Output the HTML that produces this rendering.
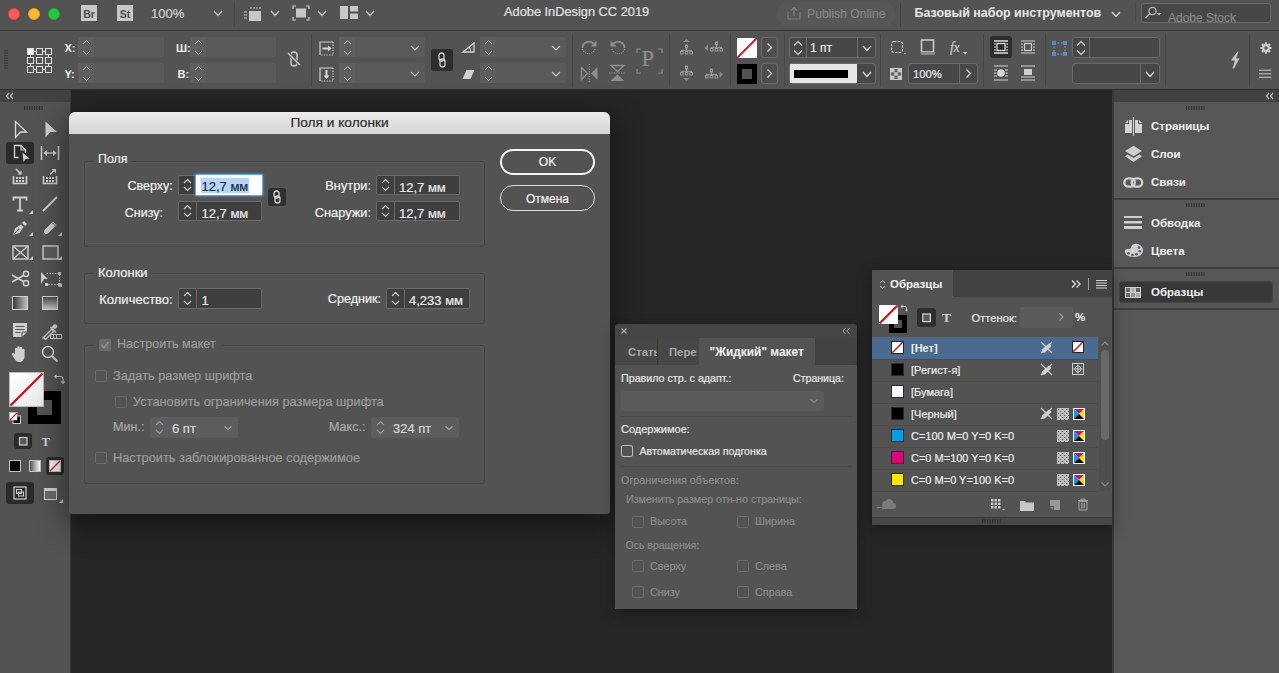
<!DOCTYPE html>
<html><head><meta charset="utf-8"><title>InDesign</title>
<style>
html,body{margin:0;padding:0;width:1279px;height:673px;overflow:hidden;background:#262626;font-family:"Liberation Sans",sans-serif;}
body>div,body>span,body>svg{position:absolute;box-sizing:border-box;}
.t{position:absolute;white-space:nowrap;line-height:1;-webkit-text-stroke:0.2px currentColor;}
.t[style*="font-weight:700"]{-webkit-text-stroke:0.05px currentColor;}
</style></head><body>
<div style="left:0px;top:0px;width:1279px;height:673px;background:#262626"></div>
<div style="left:0px;top:0px;width:1279px;height:30px;background:#535353"></div>
<div style="left:0px;top:30px;width:1279px;height:1px;background:#383838"></div>
<div style="left:0px;top:31px;width:1279px;height:58px;background:#535353"></div>
<div style="left:0px;top:89px;width:1279px;height:1px;background:#2e2e2e"></div>
<div style="left:0px;top:90px;width:70px;height:583px;background:#535353"></div>
<div style="left:0px;top:90px;width:70px;height:12px;background:#424242"></div>
<div style="left:70px;top:90px;width:1px;height:583px;background:#3a3a3a"></div>
<div style="left:1113px;top:90px;width:166px;height:583px;background:#575757"></div>
<div style="left:1112px;top:90px;width:2px;height:583px;background:#3a3a3a"></div>
<div style="left:1114px;top:90px;width:165px;height:12px;background:#424242"></div>
<div style="left:7.8px;top:7.6px;width:12.4px;height:12.4px;background:#fc5f57;border-radius:50%;border:0.5px solid #e0443e"></div>
<div style="left:27.8px;top:7.6px;width:12.4px;height:12.4px;background:#fdbc2e;border-radius:50%;border:0.5px solid #dea123"></div>
<div style="left:47.8px;top:7.6px;width:12.4px;height:12.4px;background:#2ac840;border-radius:50%;border:0.5px solid #1aab29"></div>
<div style="left:81px;top:5px;width:16px;height:16px;background:#c9c9c9"></div>
<span class="t" style="left:89px;top:8.61px;font-size:10.5px;color:#505050;font-weight:700;transform:translateX(-50%);">Br</span>
<div style="left:117px;top:5px;width:16px;height:16px;background:#c9c9c9"></div>
<span class="t" style="left:125px;top:8.61px;font-size:10.5px;color:#505050;font-weight:700;transform:translateX(-50%);">St</span>
<span class="t" style="left:151px;top:7.00px;font-size:13px;color:#d2d2d2;font-weight:400;">100%</span>
<svg style="left:213px;top:10px;" width="10" height="6.5" viewBox="0 0 10 6.5"><path d="M1 1 L5.0 5.5 L9 1" fill="none" stroke="#bdbdbd" stroke-width="1.3"/></svg>
<div style="left:234px;top:3px;width:1px;height:24px;background:#474747"></div>
<svg style="left:243px;top:5px;" width="22" height="17" viewBox="0 0 22 17"><rect x="6" y="6" width="12" height="10" fill="#c8c8c8"/><path d="M8 2v2M11 2v2M14 2v2M17 2v2" stroke="#c8c8c8" stroke-width="1"/><path d="M1 7h3M1 10h3M1 13h3" stroke="#c8c8c8" stroke-width="1"/></svg>
<svg style="left:270px;top:10px;" width="10" height="6.5" viewBox="0 0 10 6.5"><path d="M1 1 L5.0 5.5 L9 1" fill="none" stroke="#c8c8c8" stroke-width="1.3"/></svg>
<svg style="left:292px;top:5px;" width="18" height="16" viewBox="0 0 18 16"><path d="M1 4V1h3M14 1h3v3M17 12v3h-3M4 15H1v-3" fill="none" stroke="#c8c8c8" stroke-width="1.2"/><rect x="4" y="3.5" width="10" height="9" fill="#c8c8c8"/></svg>
<svg style="left:317px;top:10px;" width="10" height="6.5" viewBox="0 0 10 6.5"><path d="M1 1 L5.0 5.5 L9 1" fill="none" stroke="#c8c8c8" stroke-width="1.3"/></svg>
<svg style="left:340px;top:6px;" width="18" height="13" viewBox="0 0 18 13"><rect x="0" y="0" width="8" height="13" fill="#c8c8c8"/><rect x="10" y="0" width="8" height="5.5" fill="#c8c8c8"/><rect x="10" y="7.5" width="8" height="5.5" fill="#c8c8c8"/></svg>
<svg style="left:365px;top:10px;" width="10" height="6.5" viewBox="0 0 10 6.5"><path d="M1 1 L5.0 5.5 L9 1" fill="none" stroke="#c8c8c8" stroke-width="1.3"/></svg>
<span class="t" style="left:504px;top:5.66px;font-size:12.8px;color:#e2e2e2;font-weight:400;">Adobe InDesign CC 2019</span>
<div style="left:777px;top:2px;width:118px;height:25px;background:#575757;border-radius:12px"></div>
<svg style="left:787px;top:6px;" width="14" height="14" viewBox="0 0 14 14"><path d="M1 6v7h12V6" fill="none" stroke="#7c7c7c" stroke-width="1.2"/><path d="M7 10V1.5M4 4.5l3-3 3 3" fill="none" stroke="#7c7c7c" stroke-width="1.2"/></svg>
<span class="t" style="left:807px;top:7.67px;font-size:12.2px;color:#868686;font-weight:400;">Publish Online</span>
<div style="left:900px;top:3px;width:1px;height:24px;background:#474747"></div>
<span class="t" style="left:914.5px;top:7.46px;font-size:12.45px;color:#e6e6e6;font-weight:700;">Базовый набор инструментов</span>
<svg style="left:1111px;top:10.5px;" width="10" height="6.5" viewBox="0 0 10 6.5"><path d="M1 1 L5.0 5.5 L9 1" fill="none" stroke="#d0d0d0" stroke-width="1.4"/></svg>
<div style="left:1135px;top:3px;width:1px;height:20px;background:#4a4a4a"></div>
<div style="left:1141px;top:3px;width:130px;height:20px;background:#474747;border:1px solid #6a6a6a;border-radius:3px;overflow:hidden"><span class="t" style="left:26px;top:7.5px;font-size:12px;color:#8a8a8a">Adobe Stock</span></div>
<svg style="left:1144px;top:6px;" width="20" height="13" viewBox="0 0 20 13"><circle cx="8.5" cy="5" r="3.6" fill="none" stroke="#bbb" stroke-width="1.3"/><path d="M6 7.5L1.5 12" stroke="#bbb" stroke-width="1.5"/><path d="M12.5 7h5l-2.5 2.5z" fill="#bbb"/></svg>
<svg style="left:4px;top:50px;" width="4" height="20" viewBox="0 0 4 20"><rect x="0" y="0.0" width="4" height="1.2" fill="#3a3a3a"/><rect x="0" y="2.5" width="4" height="1.2" fill="#3a3a3a"/><rect x="0" y="5.0" width="4" height="1.2" fill="#3a3a3a"/><rect x="0" y="7.5" width="4" height="1.2" fill="#3a3a3a"/><rect x="0" y="10.0" width="4" height="1.2" fill="#3a3a3a"/><rect x="0" y="12.5" width="4" height="1.2" fill="#3a3a3a"/><rect x="0" y="15.0" width="4" height="1.2" fill="#3a3a3a"/><rect x="0" y="17.5" width="4" height="1.2" fill="#3a3a3a"/></svg>
<svg style="left:26.5px;top:47.5px;" width="27" height="27" viewBox="0 0 27 27"><rect x="0.5" y="0.5" width="6" height="6" fill="#f0f0f0" stroke="#e0e0e0" stroke-width="1"/><rect x="9.5" y="0.5" width="6" height="6" fill="none" stroke="#e0e0e0" stroke-width="1"/><rect x="18.5" y="0.5" width="6" height="6" fill="none" stroke="#e0e0e0" stroke-width="1"/><rect x="0.5" y="9.5" width="6" height="6" fill="none" stroke="#e0e0e0" stroke-width="1"/><rect x="9.5" y="9.5" width="6" height="6" fill="none" stroke="#e0e0e0" stroke-width="1"/><rect x="18.5" y="9.5" width="6" height="6" fill="none" stroke="#e0e0e0" stroke-width="1"/><rect x="0.5" y="18.5" width="6" height="6" fill="none" stroke="#e0e0e0" stroke-width="1"/><rect x="9.5" y="18.5" width="6" height="6" fill="none" stroke="#e0e0e0" stroke-width="1"/><rect x="18.5" y="18.5" width="6" height="6" fill="none" stroke="#e0e0e0" stroke-width="1"/><path d="M6.5 3.5h3M15.5 3.5h3M6.5 21.5h3M15.5 21.5h3M3.5 6.5v3M3.5 15.5v3M21.5 6.5v3M21.5 15.5v3" stroke="#e0e0e0" stroke-width="1"/></svg>
<span class="t" style="left:64.5px;top:42.69px;font-size:11px;color:#ececec;font-weight:700;">X:</span>
<span class="t" style="left:64.5px;top:68.69px;font-size:11px;color:#ececec;font-weight:700;">Y:</span>
<span class="t" style="left:176px;top:42.69px;font-size:11px;color:#ececec;font-weight:700;">Ш:</span>
<span class="t" style="left:177.5px;top:68.69px;font-size:11px;color:#ececec;font-weight:700;">В:</span>
<div style="left:78px;top:37px;width:86px;height:20px;background:#5a5a5a;border-radius:2px"></div>
<div style="left:78px;top:37px;width:16px;height:20px;background:#5e5e5e"></div>
<svg style="left:81.5px;top:39.2px;" width="9" height="6" viewBox="0 0 9 6"><path d="M1 5 L4.5 1.5 L8 5" fill="none" stroke="#bdbdbd" stroke-width="1"/></svg>
<svg style="left:81.5px;top:49.5px;" width="9" height="6" viewBox="0 0 9 6"><path d="M1 1 L4.5 4.5 L8 1" fill="none" stroke="#bdbdbd" stroke-width="1"/></svg>
<div style="left:78px;top:63px;width:86px;height:20px;background:#5a5a5a;border-radius:2px"></div>
<div style="left:78px;top:63px;width:16px;height:20px;background:#5e5e5e"></div>
<svg style="left:81.5px;top:65.2px;" width="9" height="6" viewBox="0 0 9 6"><path d="M1 5 L4.5 1.5 L8 5" fill="none" stroke="#bdbdbd" stroke-width="1"/></svg>
<svg style="left:81.5px;top:75.5px;" width="9" height="6" viewBox="0 0 9 6"><path d="M1 1 L4.5 4.5 L8 1" fill="none" stroke="#bdbdbd" stroke-width="1"/></svg>
<div style="left:190px;top:37px;width:86px;height:20px;background:#5a5a5a;border-radius:2px"></div>
<div style="left:190px;top:37px;width:16px;height:20px;background:#5e5e5e"></div>
<svg style="left:193.5px;top:39.2px;" width="9" height="6" viewBox="0 0 9 6"><path d="M1 5 L4.5 1.5 L8 5" fill="none" stroke="#bdbdbd" stroke-width="1"/></svg>
<svg style="left:193.5px;top:49.5px;" width="9" height="6" viewBox="0 0 9 6"><path d="M1 1 L4.5 4.5 L8 1" fill="none" stroke="#bdbdbd" stroke-width="1"/></svg>
<div style="left:190px;top:63px;width:86px;height:20px;background:#5a5a5a;border-radius:2px"></div>
<div style="left:190px;top:63px;width:16px;height:20px;background:#5e5e5e"></div>
<svg style="left:193.5px;top:65.2px;" width="9" height="6" viewBox="0 0 9 6"><path d="M1 5 L4.5 1.5 L8 5" fill="none" stroke="#bdbdbd" stroke-width="1"/></svg>
<svg style="left:193.5px;top:75.5px;" width="9" height="6" viewBox="0 0 9 6"><path d="M1 1 L4.5 4.5 L8 1" fill="none" stroke="#bdbdbd" stroke-width="1"/></svg>
<svg style="left:286px;top:51px;" width="16" height="16" viewBox="0 0 16 16"><rect x="5" y="1" width="6" height="14" rx="3" fill="none" stroke="#c8c8c8" stroke-width="1.5"/><path d="M2 2L14 14" stroke="#535353" stroke-width="3"/><path d="M2 2L14 14" stroke="#c8c8c8" stroke-width="1.5"/></svg>
<div style="left:311px;top:34px;width:1px;height:53px;background:#474747"></div>
<svg style="left:318.5px;top:40.5px;" width="15" height="15" viewBox="0 0 15 15"><path d="M1 14V1h13" fill="none" stroke="#d0d0d0" stroke-width="1.2"/><path d="M14 1v13H1" fill="none" stroke="#d0d0d0" stroke-width="1.2" stroke-dasharray="1.3 1.3"/><path d="M3.5 7.5h6" stroke="#d8d8d8" stroke-width="2"/><path d="M9 4.5l3.5 3-3.5 3z" fill="#d8d8d8"/></svg>
<svg style="left:318.5px;top:66.5px;" width="15" height="15" viewBox="0 0 15 15"><path d="M1 14V1h13" fill="none" stroke="#d0d0d0" stroke-width="1.2"/><path d="M14 1v13H1" fill="none" stroke="#d0d0d0" stroke-width="1.2" stroke-dasharray="1.3 1.3"/><path d="M7.5 3v6" stroke="#d8d8d8" stroke-width="2"/><path d="M4.5 8.5l3 3.5 3-3.5z" fill="#d8d8d8"/></svg>
<div style="left:339px;top:37px;width:86px;height:20px;background:#5a5a5a;border-radius:2px"></div>
<div style="left:339px;top:37px;width:16px;height:20px;background:#5e5e5e"></div>
<svg style="left:342.5px;top:39.2px;" width="9" height="6" viewBox="0 0 9 6"><path d="M1 5 L4.5 1.5 L8 5" fill="none" stroke="#bdbdbd" stroke-width="1"/></svg>
<svg style="left:342.5px;top:49.5px;" width="9" height="6" viewBox="0 0 9 6"><path d="M1 1 L4.5 4.5 L8 1" fill="none" stroke="#bdbdbd" stroke-width="1"/></svg>
<svg style="left:409.5px;top:44.5px;" width="10" height="6" viewBox="0 0 10 6"><path d="M1 1 L5.0 5 L9 1" fill="none" stroke="#c8c8c8" stroke-width="1.15"/></svg>
<div style="left:339px;top:63px;width:86px;height:20px;background:#5a5a5a;border-radius:2px"></div>
<div style="left:339px;top:63px;width:16px;height:20px;background:#5e5e5e"></div>
<svg style="left:342.5px;top:65.2px;" width="9" height="6" viewBox="0 0 9 6"><path d="M1 5 L4.5 1.5 L8 5" fill="none" stroke="#bdbdbd" stroke-width="1"/></svg>
<svg style="left:342.5px;top:75.5px;" width="9" height="6" viewBox="0 0 9 6"><path d="M1 1 L4.5 4.5 L8 1" fill="none" stroke="#bdbdbd" stroke-width="1"/></svg>
<svg style="left:409.5px;top:70.5px;" width="10" height="6" viewBox="0 0 10 6"><path d="M1 1 L5.0 5 L9 1" fill="none" stroke="#c8c8c8" stroke-width="1.15"/></svg>
<div style="left:431px;top:49px;width:22px;height:22px;background:#2d2d2d;border-radius:3px"></div>
<svg style="left:437px;top:52px;" width="10" height="16" viewBox="0 0 10 16"><rect x="2" y="1" width="5" height="8" rx="2.5" fill="none" stroke="#d0d0d0" stroke-width="1.3"/><rect x="3" y="7" width="5" height="8" rx="2.5" fill="none" stroke="#d0d0d0" stroke-width="1.3"/></svg>
<svg style="left:461px;top:42px;" width="15" height="11" viewBox="0 0 15 11"><path d="M2 10L13 1V10Z" fill="none" stroke="#d0d0d0" stroke-width="1.3" stroke-linejoin="miter"/><path d="M8.2 4.9A8 8 0 0 1 9.6 10" fill="none" stroke="#d0d0d0" stroke-width="1.1"/></svg>
<svg style="left:462px;top:69px;" width="13" height="11" viewBox="0 0 13 11"><path d="M4.5 1H12.5L8.5 10H0.5Z" fill="#d0d0d0"/></svg>
<div style="left:480px;top:37px;width:86px;height:20px;background:#5a5a5a;border-radius:2px"></div>
<div style="left:480px;top:37px;width:16px;height:20px;background:#5e5e5e"></div>
<svg style="left:483.5px;top:39.2px;" width="9" height="6" viewBox="0 0 9 6"><path d="M1 5 L4.5 1.5 L8 5" fill="none" stroke="#bdbdbd" stroke-width="1"/></svg>
<svg style="left:483.5px;top:49.5px;" width="9" height="6" viewBox="0 0 9 6"><path d="M1 1 L4.5 4.5 L8 1" fill="none" stroke="#bdbdbd" stroke-width="1"/></svg>
<svg style="left:550.5px;top:44.5px;" width="10" height="6" viewBox="0 0 10 6"><path d="M1 1 L5.0 5 L9 1" fill="none" stroke="#c8c8c8" stroke-width="1.15"/></svg>
<div style="left:480px;top:63px;width:86px;height:20px;background:#5a5a5a;border-radius:2px"></div>
<div style="left:480px;top:63px;width:16px;height:20px;background:#5e5e5e"></div>
<svg style="left:483.5px;top:65.2px;" width="9" height="6" viewBox="0 0 9 6"><path d="M1 5 L4.5 1.5 L8 5" fill="none" stroke="#bdbdbd" stroke-width="1"/></svg>
<svg style="left:483.5px;top:75.5px;" width="9" height="6" viewBox="0 0 9 6"><path d="M1 1 L4.5 4.5 L8 1" fill="none" stroke="#bdbdbd" stroke-width="1"/></svg>
<svg style="left:550.5px;top:70.5px;" width="10" height="6" viewBox="0 0 10 6"><path d="M1 1 L5.0 5 L9 1" fill="none" stroke="#c8c8c8" stroke-width="1.15"/></svg>
<div style="left:572px;top:34px;width:1px;height:53px;background:#474747"></div>
<svg style="left:580px;top:38px;" width="19" height="18" viewBox="0 0 19 18"><path d="M2.5 10A6.5 6.5 0 0 1 13.5 5.5" fill="none" stroke="#8e8e8e" stroke-width="1.8"/><path d="M16.5 2.5V8.5H10.5Z" fill="#8e8e8e"/><path d="M2.5 11A6.5 6.5 0 0 0 15 11" fill="none" stroke="#8e8e8e" stroke-width="1.2" stroke-dasharray="1 1.2"/></svg>
<svg style="left:608px;top:38px;" width="19" height="18" viewBox="0 0 19 18"><path d="M16.5 10A6.5 6.5 0 0 0 5.5 5.5" fill="none" stroke="#8e8e8e" stroke-width="1.8"/><path d="M2.5 2.5V8.5H8.5Z" fill="#8e8e8e"/><path d="M16.5 11A6.5 6.5 0 0 1 4 11" fill="none" stroke="#8e8e8e" stroke-width="1.2" stroke-dasharray="1 1.2"/></svg>
<svg style="left:580px;top:64px;" width="19" height="18" viewBox="0 0 19 18"><path d="M1.5 3.5V15.5L7.5 9.5Z" fill="none" stroke="#8e8e8e" stroke-width="1.3"/><path d="M17.5 3V16L11 9.5Z" fill="#8e8e8e"/><path d="M9.3 0V18" stroke="#9a9a9a" stroke-width="1" stroke-dasharray="1.2 1.2"/></svg>
<svg style="left:608px;top:64px;" width="19" height="18" viewBox="0 0 19 18"><path d="M3 1.5H16L9.5 7.5Z" fill="none" stroke="#8e8e8e" stroke-width="1.3"/><path d="M2.5 17H16.5L9.5 10.5Z" fill="#8e8e8e"/><path d="M1 9H18" stroke="#9a9a9a" stroke-width="1" stroke-dasharray="1.2 1.2"/></svg>
<svg style="left:636px;top:48px;" width="27" height="26" viewBox="0 0 27 26"><path d="M1 5V1h4M22 1h4v4M26 21v4h-4M5 25H1v-4" fill="none" stroke="#8e8e8e" stroke-width="1.2"/></svg>
<span class="t" style="left:641.5px;top:47.95px;font-size:22.5px;color:#8e8e8e;font-weight:400;font-family:'Liberation Serif',serif">P</span>
<div style="left:669px;top:34px;width:1px;height:53px;background:#474747"></div>
<svg style="left:676px;top:36px;" width="60" height="48" viewBox="0 0 60 48"><rect x="9.5" y="9" width="2" height="3" fill="none" stroke="#9a9a9a" stroke-width="1"/><path d="M10.5 12V14M5.5 14.3H15.5M5.5 14V15.5M10.5 14V15.5M15.5 14V15.5" stroke="#9a9a9a" stroke-width="1"/><rect x="4.5" y="15.5" width="2.5" height="2.5" fill="none" stroke="#9a9a9a" stroke-width="1"/><rect x="9.3" y="15.5" width="2.5" height="2.5" fill="none" stroke="#9a9a9a" stroke-width="1"/><rect x="14" y="15.5" width="2.5" height="2.5" fill="none" stroke="#9a9a9a" stroke-width="1"/><path d="M7 6H14L10.5 3Z" fill="#8a8a8a"/><rect x="9.5" y="30" width="2" height="3" fill="none" stroke="#9a9a9a" stroke-width="1"/><path d="M10.5 33V35M5.5 35.3H15.5M5.5 35V36.5M10.5 35V36.5M15.5 35V36.5" stroke="#9a9a9a" stroke-width="1"/><rect x="4.5" y="36.5" width="2.5" height="2.5" fill="none" stroke="#9a9a9a" stroke-width="1"/><rect x="9.3" y="36.5" width="2.5" height="2.5" fill="none" stroke="#9a9a9a" stroke-width="1"/><rect x="14" y="36.5" width="2.5" height="2.5" fill="none" stroke="#9a9a9a" stroke-width="1"/><path d="M7 42H14L10.5 45Z" fill="#8a8a8a"/><rect x="39.5" y="6" width="2" height="3" fill="none" stroke="#9a9a9a" stroke-width="1"/><path d="M40.5 9V11M35.5 11.3H45.5M35.5 11V12.5M40.5 11V12.5M45.5 11V12.5" stroke="#9a9a9a" stroke-width="1"/><rect x="34.5" y="12.5" width="2.5" height="2.5" fill="none" stroke="#9a9a9a" stroke-width="1"/><rect x="39.3" y="12.5" width="2.5" height="2.5" fill="none" stroke="#9a9a9a" stroke-width="1"/><rect x="44" y="12.5" width="2.5" height="2.5" fill="none" stroke="#9a9a9a" stroke-width="1"/><path d="M32 8.5V15.5L28.5 12Z" fill="#8a8a8a"/><rect x="34.5" y="33" width="2" height="3" fill="none" stroke="#9a9a9a" stroke-width="1"/><path d="M35.5 36V38M30.5 38.3H40.5M30.5 38V39.5M35.5 38V39.5M40.5 38V39.5" stroke="#9a9a9a" stroke-width="1"/><rect x="29.5" y="39.5" width="2.5" height="2.5" fill="none" stroke="#9a9a9a" stroke-width="1"/><rect x="34.3" y="39.5" width="2.5" height="2.5" fill="none" stroke="#9a9a9a" stroke-width="1"/><rect x="39" y="39.5" width="2.5" height="2.5" fill="none" stroke="#9a9a9a" stroke-width="1"/><path d="M43.5 35V42L47 38.5Z" fill="#8a8a8a"/></svg>
<div style="left:730px;top:34px;width:1px;height:53px;background:#474747"></div>
<div style="left:737px;top:38px;width:20px;height:20px;background:#fafafa"></div>
<svg style="left:737px;top:38px;" width="20" height="20" viewBox="0 0 20 20"><path d="M0 20L20 0" stroke="#c0262c" stroke-width="2"/></svg>
<div style="left:761px;top:37px;width:17px;height:21px;background:#4d4d4d;border:1px solid #6a6a6a;border-radius:3px"></div>
<svg style="left:765px;top:42px;" width="9" height="11" viewBox="0 0 9 11"><path d="M2.5 1.5L6.5 5.5L2.5 9.5" fill="none" stroke="#e0e0e0" stroke-width="1.3"/></svg>
<div style="left:737px;top:64px;width:20px;height:20px;background:#000"></div>
<div style="left:742px;top:69px;width:10px;height:10px;background:#535353"></div>
<div style="left:761px;top:63px;width:17px;height:21px;background:#4d4d4d;border:1px solid #6a6a6a;border-radius:3px"></div>
<svg style="left:765px;top:68px;" width="9" height="11" viewBox="0 0 9 11"><path d="M2.5 1.5L6.5 5.5L2.5 9.5" fill="none" stroke="#e0e0e0" stroke-width="1.3"/></svg>
<div style="left:784px;top:34px;width:1px;height:53px;background:#474747"></div>
<div style="left:789px;top:37px;width:87px;height:21px;background:#474747;border:1px solid #6a6a6a;border-radius:3px"></div>
<div style="left:806px;top:38px;width:1px;height:19px;background:#6a6a6a"></div>
<div style="left:857px;top:38px;width:1px;height:19px;background:#6a6a6a"></div>
<svg style="left:792.5px;top:40px;" width="10" height="7" viewBox="0 0 10 7"><path d="M1 5.5L5 1.5L9 5.5" fill="none" stroke="#d0d0d0" stroke-width="1.2"/></svg>
<svg style="left:792.5px;top:49px;" width="10" height="7" viewBox="0 0 10 7"><path d="M1 1.5L5 5.5L9 1.5" fill="none" stroke="#d0d0d0" stroke-width="1.2"/></svg>
<span class="t" style="left:810px;top:41.84px;font-size:12px;color:#eaeaea;font-weight:400;">1 пт</span>
<svg style="left:862px;top:45px;" width="10" height="6.5" viewBox="0 0 10 6.5"><path d="M1 1 L5.0 5.5 L9 1" fill="none" stroke="#dcdcdc" stroke-width="1.3"/></svg>
<div style="left:789px;top:63px;width:87px;height:21px;background:#474747;border:1px solid #6a6a6a;border-radius:3px"></div>
<div style="left:790px;top:64px;width:67px;height:19px;background:#e6e6e6"></div>
<div style="left:794px;top:70px;width:54px;height:8px;background:#000"></div>
<svg style="left:862px;top:71px;" width="10" height="6.5" viewBox="0 0 10 6.5"><path d="M1 1 L5.0 5.5 L9 1" fill="none" stroke="#dcdcdc" stroke-width="1.3"/></svg>
<div style="left:880px;top:34px;width:1px;height:53px;background:#474747"></div>
<svg style="left:890px;top:40px;" width="18" height="16" viewBox="0 0 18 16"><rect x="1.5" y="1.5" width="11" height="11" rx="2.5" fill="none" stroke="#d0d0d0" stroke-width="1.2" stroke-dasharray="2.5 1.2"/><path d="M14 13l2 0l-1 1.5z" fill="#d0d0d0"/></svg>
<svg style="left:920px;top:39px;" width="16" height="17" viewBox="0 0 16 17"><rect x="1.5" y="1" width="12" height="12" fill="none" stroke="#d0d0d0" stroke-width="1.5"/><rect x="1" y="13" width="14" height="3" fill="#8a8a8a"/></svg>
<span class="t" style="left:950px;top:40.65px;font-size:14px;color:#c8c8c8;font-weight:400;font-style:italic;font-family:'Liberation Serif',serif;letter-spacing:-0.5px">fx</span>
<svg style="left:962.5px;top:51.5px;" width="5" height="3" viewBox="0 0 5 3"><path d="M0 0h4.5l-2.25 2.5z" fill="#c8c8c8"/></svg>
<svg style="left:890px;top:68px;" width="12" height="12" viewBox="0 0 12 12"><rect x="0.5" y="0.5" width="11" height="11" fill="#6a6a6a" stroke="#c8c8c8" stroke-width="1"/><rect x="1" y="1" width="3.3" height="3.3" fill="#c8c8c8"/><rect x="7.7" y="1" width="3.3" height="3.3" fill="#c8c8c8"/><rect x="4.3" y="4.3" width="3.4" height="3.4" fill="#c8c8c8"/><rect x="1" y="7.7" width="3.3" height="3.3" fill="#c8c8c8"/><rect x="7.7" y="7.7" width="3.3" height="3.3" fill="#c8c8c8"/></svg>
<div style="left:908px;top:63px;width:70px;height:21px;background:#474747;border:1px solid #6a6a6a;border-radius:3px"></div>
<div style="left:959px;top:64px;width:1px;height:19px;background:#6a6a6a"></div>
<span class="t" style="left:913px;top:68.93px;font-size:11.3px;color:#eaeaea;font-weight:400;">100%</span>
<svg style="left:964px;top:68px;" width="9" height="11" viewBox="0 0 9 11"><path d="M2.5 1.5L6.5 5.5L2.5 9.5" fill="none" stroke="#e0e0e0" stroke-width="1.3"/></svg>
<div style="left:983px;top:34px;width:1px;height:53px;background:#474747"></div>
<div style="left:990px;top:36px;width:22px;height:22px;background:#2d2d2d;border-radius:3px"></div>
<svg style="left:992px;top:38px;" width="18" height="18" viewBox="0 0 18 18"><path d="M2 3h14M2 15h14" stroke="#e0e0e0" stroke-width="1.5"/><rect x="5" y="5.5" width="8" height="7" fill="none" stroke="#e0e0e0" stroke-width="1.2"/><path d="M2 6h2M14 6h2M2 9h2M14 9h2M2 12h2M14 12h2" stroke="#e0e0e0" stroke-width="1"/></svg>
<svg style="left:1019px;top:38px;" width="18" height="18" viewBox="0 0 18 18"><path d="M2 3h14M2 15h14" stroke="#d0d0d0" stroke-width="1.2"/><rect x="5.5" y="5.5" width="7" height="7" fill="none" stroke="#d0d0d0" stroke-width="1.2"/><path d="M2 6h2M14 6h2M2 9h2M14 9h2M2 12h2M14 12h2" stroke="#d0d0d0" stroke-width="1"/></svg>
<svg style="left:992px;top:64px;" width="18" height="18" viewBox="0 0 18 18"><path d="M2 2h14M2 16h14M2 6h3M13 6h3M2 9h2.5M13.5 9h2.5M2 12h3M13 12h3" stroke="#d0d0d0" stroke-width="1.2"/><circle cx="9" cy="9" r="3.8" fill="#d8d8d8"/></svg>
<svg style="left:1019px;top:64px;" width="18" height="18" viewBox="0 0 18 18"><path d="M2 2h14M2 16h14" stroke="#d0d0d0" stroke-width="1.2"/><rect x="5" y="5" width="8" height="6" fill="#d0d0d0"/><path d="M2 13h14" stroke="#d0d0d0" stroke-width="1"/></svg>
<div style="left:1045px;top:34px;width:1px;height:53px;background:#474747"></div>
<svg style="left:1051px;top:40px;" width="18" height="17" viewBox="0 0 18 17"><rect x="3" y="3" width="11" height="11" fill="none" stroke="#9a9a9a" stroke-width="1" stroke-dasharray="2 1.5"/><rect x="1" y="1" width="4" height="4" fill="#4a8fd8"/><rect x="12" y="1" width="4" height="4" fill="#4a8fd8"/><rect x="1" y="12" width="4" height="4" fill="#4a8fd8"/><rect x="12" y="12" width="4" height="4" fill="#4a8fd8"/></svg>
<div style="left:1072px;top:37px;width:88px;height:21px;background:#474747;border:1px solid #6a6a6a;border-radius:3px"></div>
<div style="left:1089px;top:38px;width:1px;height:19px;background:#6a6a6a"></div>
<svg style="left:1075.5px;top:40px;" width="10" height="7" viewBox="0 0 10 7"><path d="M1 5.5L5 1.5L9 5.5" fill="none" stroke="#d0d0d0" stroke-width="1.2"/></svg>
<svg style="left:1075.5px;top:49px;" width="10" height="7" viewBox="0 0 10 7"><path d="M1 1.5L5 5.5L9 1.5" fill="none" stroke="#d0d0d0" stroke-width="1.2"/></svg>
<div style="left:1072px;top:63px;width:88px;height:21px;background:#474747;border:1px solid #6a6a6a;border-radius:3px"></div>
<div style="left:1140px;top:64px;width:1px;height:19px;background:#6a6a6a"></div>
<svg style="left:1145px;top:71px;" width="10" height="6.5" viewBox="0 0 10 6.5"><path d="M1 1 L5.0 5.5 L9 1" fill="none" stroke="#dcdcdc" stroke-width="1.3"/></svg>
<svg style="left:1229px;top:51px;" width="13" height="18" viewBox="0 0 13 18"><path d="M8.5 0.5L2 9.5H6L3.5 17.5L5 17.5L10.5 7.5H7L9.5 0.5Z" fill="#c8c8c8"/></svg>
<div style="left:1249px;top:34px;width:1px;height:53px;background:#474747"></div>
<svg style="left:1259.5px;top:41.5px;" width="12" height="12" viewBox="0 0 12 12"><circle cx="6" cy="6" r="3.9" fill="#c8c8c8"/><rect x="4.9" y="0.3" width="2.2" height="11.4" rx="0.6" fill="#c8c8c8" transform="rotate(0 6 6)"/><rect x="4.9" y="0.3" width="2.2" height="11.4" rx="0.6" fill="#c8c8c8" transform="rotate(45 6 6)"/><rect x="4.9" y="0.3" width="2.2" height="11.4" rx="0.6" fill="#c8c8c8" transform="rotate(90 6 6)"/><rect x="4.9" y="0.3" width="2.2" height="11.4" rx="0.6" fill="#c8c8c8" transform="rotate(135 6 6)"/><circle cx="6" cy="6" r="1.7" fill="#535353"/></svg>
<svg style="left:1259px;top:69px;" width="13" height="10" viewBox="0 0 13 10"><path d="M0 1.2h12.5M0 4.7h12.5M0 8.2h12.5" stroke="#c8c8c8" stroke-width="1.1"/></svg>
<div style="left:1165px;top:34px;width:1px;height:53px;background:#474747"></div>
<svg style="left:5px;top:92px;" width="9" height="8" viewBox="0 0 9 8"><path d="M4 1L1.5 4L4 7M8 1L5.5 4L8 7" fill="none" stroke="#bdbdbd" stroke-width="1.2"/></svg>
<svg style="left:24px;top:106px;" width="21" height="4" viewBox="0 0 21 4"><rect x="0.0" y="0" width="1.2" height="4" fill="#333"/><rect x="2.5" y="0" width="1.2" height="4" fill="#333"/><rect x="5.0" y="0" width="1.2" height="4" fill="#333"/><rect x="7.5" y="0" width="1.2" height="4" fill="#333"/><rect x="10.0" y="0" width="1.2" height="4" fill="#333"/><rect x="12.5" y="0" width="1.2" height="4" fill="#333"/><rect x="15.0" y="0" width="1.2" height="4" fill="#333"/><rect x="17.5" y="0" width="1.2" height="4" fill="#333"/></svg>
<svg style="left:14px;top:120px;" width="15" height="19" viewBox="0 0 15 19"><path d="M1.5 1.5L12.5 12H6.5L1.5 17.5Z" fill="none" stroke="#d6d6d6" stroke-width="1.3" stroke-linejoin="miter"/></svg>
<svg style="left:44px;top:120px;" width="15" height="19" viewBox="0 0 15 19"><path d="M1.5 1.5L13 12H6.5L1.5 17.5Z" fill="#cfcfcf"/></svg>
<div style="left:6px;top:142px;width:28px;height:22px;background:#2b2b2b;border-radius:3px"></div>
<svg style="left:12px;top:143px;" width="20" height="20" viewBox="0 0 20 20"><path d="M6.5 14.5H2.5V2.5H9L13.5 7V10" fill="none" stroke="#d6d6d6" stroke-width="1.3"/><path d="M9 2.5V7H13.5" fill="none" stroke="#d6d6d6" stroke-width="1.1"/><path d="M10.5 9.5L17.5 15.5L13.5 16L11.5 19Z" fill="#cfcfcf"/></svg>
<svg style="left:40px;top:145px;" width="20" height="16" viewBox="0 0 20 16"><path d="M1.5 1V15M18.5 1V15" stroke="#cfcfcf" stroke-width="1.5"/><path d="M4 8H16" stroke="#cfcfcf" stroke-width="1.2"/><path d="M3.5 8L7 5V11ZM16.5 8L13 5V11Z" fill="#cfcfcf"/></svg>
<svg style="left:12px;top:168px;" width="16" height="17" viewBox="0 0 16 17"><path d="M1.5 8V15.5H14.5V8" fill="none" stroke="#cfcfcf" stroke-width="1.6"/><rect x="4" y="9" width="2" height="2" fill="#cfcfcf"/><rect x="4" y="12" width="2" height="2" fill="#cfcfcf"/><rect x="7" y="9" width="2" height="2" fill="#cfcfcf"/><rect x="7" y="12" width="2" height="2" fill="#cfcfcf"/><rect x="10" y="9" width="2" height="2" fill="#cfcfcf"/><rect x="10" y="12" width="2" height="2" fill="#cfcfcf"/><path d="M4 1L8.5 5.5" stroke="#cfcfcf" stroke-width="1.5"/><path d="M9.5 2.5V6.5H5.5Z" fill="#cfcfcf"/></svg>
<svg style="left:42px;top:168px;" width="16" height="17" viewBox="0 0 16 17"><path d="M1.5 8V15.5H14.5V8" fill="none" stroke="#cfcfcf" stroke-width="1.6"/><rect x="4" y="9" width="2" height="2" fill="#cfcfcf"/><rect x="4" y="12" width="2" height="2" fill="#cfcfcf"/><rect x="7" y="9" width="2" height="2" fill="#cfcfcf"/><rect x="7" y="12" width="2" height="2" fill="#cfcfcf"/><rect x="10" y="9" width="2" height="2" fill="#cfcfcf"/><rect x="10" y="12" width="2" height="2" fill="#cfcfcf"/><path d="M8 6.5L13 1.5" stroke="#cfcfcf" stroke-width="1.5"/><path d="M9.5 1H14V5.5Z" fill="#cfcfcf"/></svg>
<svg style="left:12px;top:196px;" width="17" height="16" viewBox="0 0 17 16"><path d="M1.5 4.5V1.5H14.5V4.5M8 1.5V14.5M5 14.5H11" fill="none" stroke="#d0d0d0" stroke-width="1.8"/></svg>
<svg style="left:29px;top:210px;" width="4" height="4" viewBox="0 0 4 4"><path d="M4 0V4H0z" fill="#cfcfcf"/></svg>
<svg style="left:42px;top:196px;" width="16" height="16" viewBox="0 0 16 16"><path d="M1 15L15 1" stroke="#cfcfcf" stroke-width="1.8"/></svg>
<svg style="left:12px;top:219px;" width="17" height="17" viewBox="0 0 17 17"><path d="M1 16L3 9.5L9 5.5L11.5 8L7.5 14Z" fill="#cfcfcf"/><path d="M10 4L12 2L15 5L13 7Z" fill="#cfcfcf"/><path d="M1.5 15.5L6 11" stroke="#535353" stroke-width="0.9"/><circle cx="6.5" cy="10.5" r="1" fill="#535353"/></svg>
<svg style="left:29px;top:232px;" width="4" height="4" viewBox="0 0 4 4"><path d="M4 0V4H0z" fill="#cfcfcf"/></svg>
<svg style="left:42px;top:219px;" width="17" height="17" viewBox="0 0 17 17"><path d="M1.5 15.5L2.5 11L11 2.5L14.5 6L6 14.5Z" fill="#cfcfcf"/><path d="M10 3.5L13.5 7" stroke="#535353" stroke-width="0.9"/><path d="M1.5 15.5L2 13.5L3.5 15Z" fill="#535353"/></svg>
<svg style="left:58px;top:232px;" width="4" height="4" viewBox="0 0 4 4"><path d="M4 0V4H0z" fill="#cfcfcf"/></svg>
<svg style="left:12px;top:245px;" width="17" height="15" viewBox="0 0 17 15"><rect x="1" y="1" width="15" height="13" fill="none" stroke="#cfcfcf" stroke-width="1.4"/><path d="M1 1L16 14M16 1L1 14" stroke="#cfcfcf" stroke-width="1.2"/></svg>
<svg style="left:29px;top:256px;" width="4" height="4" viewBox="0 0 4 4"><path d="M4 0V4H0z" fill="#cfcfcf"/></svg>
<svg style="left:42px;top:245px;" width="17" height="15" viewBox="0 0 17 15"><rect x="1" y="1" width="15" height="13" fill="#5d5d5d" stroke="#cfcfcf" stroke-width="1.4"/></svg>
<svg style="left:58px;top:256px;" width="4" height="4" viewBox="0 0 4 4"><path d="M4 0V4H0z" fill="#cfcfcf"/></svg>
<svg style="left:11px;top:270px;" width="19" height="17" viewBox="0 0 19 17"><circle cx="15" cy="3.8" r="2.6" fill="none" stroke="#cfcfcf" stroke-width="1.5"/><circle cx="15" cy="13.2" r="2.6" fill="none" stroke="#cfcfcf" stroke-width="1.5"/><path d="M1 5L12.5 11.5M1 12L12.5 5.5" stroke="#cfcfcf" stroke-width="1.7"/></svg>
<svg style="left:40px;top:271px;" width="21" height="16" viewBox="0 0 21 16"><path d="M1 1L8 8H4L1 13Z" fill="#cfcfcf"/><path d="M6.5 2.5H19.5V13.5H6.5" fill="none" stroke="#cfcfcf" stroke-width="1.1" stroke-dasharray="1.5 1.3"/><rect x="18" y="1" width="3" height="3" fill="#cfcfcf"/><rect x="18" y="12" width="3" height="3" fill="#cfcfcf"/><rect x="5" y="12" width="3" height="3" fill="#cfcfcf"/></svg>
<svg style="left:58px;top:283px;" width="4" height="4" viewBox="0 0 4 4"><path d="M4 0V4H0z" fill="#cfcfcf"/></svg>
<div style="left:12px;top:296px;width:16px;height:14px;border:1px solid #cfcfcf;background:linear-gradient(90deg,#3a3a3a,#bdbdbd)"></div>
<div style="left:42px;top:296px;width:16px;height:14px;border:1px solid #cfcfcf;background:linear-gradient(180deg,#4a4a4a,#c4c4c4)"></div>
<svg style="left:12px;top:322px;" width="17" height="16" viewBox="0 0 17 16"><path d="M1 1H15V10L10 15H1Z" fill="#cfcfcf"/><path d="M3.5 4.5H12.5M3.5 7.5H12.5M3.5 10.5H8.5" stroke="#535353" stroke-width="1.2"/><path d="M10 15V10H15" fill="none" stroke="#535353" stroke-width="1"/></svg>
<svg style="left:41px;top:321px;" width="22" height="19" viewBox="0 0 22 19"><path d="M2.5 16.5L1.5 17.5M2.5 16.5L11 8L13 10L4.5 18.5Z" fill="none" stroke="#cfcfcf" stroke-width="1.4"/><path d="M10 6.5L13 3.5A2.2 2.2 0 0 1 16 6.5L14.5 8Z" fill="#cfcfcf"/><path d="M9.5 6L15 11.5" stroke="#cfcfcf" stroke-width="1.6"/><rect x="9.5" y="13.5" width="11" height="4" fill="none" stroke="#cfcfcf" stroke-width="1"/><path d="M12.5 13.5V17.5M15.5 13.5V17.5" stroke="#cfcfcf" stroke-width="1"/></svg>
<svg style="left:11px;top:345px;" width="18" height="18" viewBox="0 0 18 18"><path d="M4 9V4A1.2 1.2 0 0 1 6.4 4V8.5V2.5A1.2 1.2 0 0 1 8.8 2.5V8.5V3A1.2 1.2 0 0 1 11.2 3V9V5A1.2 1.2 0 0 1 13.6 5V11C13.6 14.5 11.5 17 8.5 17C6 17 4.5 15.5 3 13L1 9.5A1.1 1.1 0 0 1 3 8.5Z" fill="#cfcfcf"/></svg>
<svg style="left:41px;top:345px;" width="18" height="18" viewBox="0 0 18 18"><circle cx="7" cy="7" r="5.5" fill="none" stroke="#cfcfcf" stroke-width="1.5"/><path d="M11 11L16.5 16.5" stroke="#cfcfcf" stroke-width="2.2"/></svg>
<div style="left:28px;top:391px;width:33px;height:33px;background:#000"></div>
<div style="left:37px;top:400px;width:15px;height:15px;background:#535353"></div>
<div style="left:9px;top:372px;width:35px;height:35px;background:linear-gradient(135deg,#ffffff,#e8e8e8);border:1px solid #bbb"></div>
<svg style="left:9px;top:372px;" width="35" height="35" viewBox="0 0 35 35"><path d="M1.5 33.5L33.5 1.5" stroke="#c4161c" stroke-width="2.4"/></svg>
<svg style="left:53px;top:373px;" width="12" height="12" viewBox="0 0 12 12"><path d="M2 3.5H7.5A2.5 2.5 0 0 1 10 6V10" fill="none" stroke="#cfcfcf" stroke-width="1.1"/><path d="M1 3.5L3.5 1V6ZM10 11L7.5 8.5H12.5Z" fill="#cfcfcf"/></svg>
<svg style="left:9px;top:412px;" width="12" height="12" viewBox="0 0 12 12"><rect x="4" y="4" width="7.5" height="7.5" fill="#000" stroke="#cfcfcf" stroke-width="1"/><rect x="0.5" y="0.5" width="7.5" height="7.5" fill="#fff" stroke="#bbb" stroke-width="0.8"/><path d="M1 8L8 1" stroke="#c2232b" stroke-width="1.1"/></svg>
<div style="left:14px;top:433px;width:18px;height:16px;background:#2b2b2b;border-radius:3px"></div>
<svg style="left:17px;top:435px;" width="12" height="12" viewBox="0 0 12 12"><rect x="2.5" y="2.5" width="7.5" height="7.5" fill="#555" stroke="#d0d0d0" stroke-width="1.2"/></svg>
<span class="t" style="left:41.5px;top:436.42px;font-size:12.5px;color:#d0d0d0;font-weight:700;font-family:'Liberation Serif',serif">T</span>
<div style="left:9px;top:460px;width:12px;height:12px;background:#000;border:1px solid #bdbdbd"></div>
<div style="left:29px;top:460px;width:12px;height:12px;border:1px solid #bdbdbd;background:linear-gradient(90deg,#555,#fff)"></div>
<div style="left:46px;top:457px;width:18px;height:18px;background:#2b2b2b;border-radius:3px"></div>
<div style="left:49px;top:460px;width:12px;height:12px;background:#f0f0f0;border:1px solid #bdbdbd"></div>
<svg style="left:49px;top:460px;" width="12" height="12" viewBox="0 0 12 12"><path d="M1 11L11 1" stroke="#c2232b" stroke-width="1.5"/></svg>
<div style="left:6px;top:482px;width:28px;height:22px;background:#2b2b2b;border-radius:3px"></div>
<svg style="left:13px;top:486px;" width="14" height="14" viewBox="0 0 14 14"><rect x="1" y="1" width="12" height="12" fill="none" stroke="#cfcfcf" stroke-width="1.2"/><rect x="3.5" y="3.5" width="5" height="4" fill="none" stroke="#cfcfcf" stroke-width="1"/><rect x="5.5" y="6" width="5" height="4" fill="none" stroke="#cfcfcf" stroke-width="1"/></svg>
<svg style="left:44px;top:488px;" width="13" height="12" viewBox="0 0 13 12"><rect x="0.5" y="0.5" width="12" height="11" fill="#6a6a6a" stroke="#cfcfcf" stroke-width="1"/><rect x="0.5" y="0.5" width="12" height="2.5" fill="#cfcfcf"/></svg>
<svg style="left:59px;top:499px;" width="4" height="4" viewBox="0 0 4 4"><path d="M4 0V4H0z" fill="#cfcfcf"/></svg>
<svg style="left:1265px;top:92px;" width="9" height="8" viewBox="0 0 9 8"><path d="M4 1L1.5 4L4 7M8 1L5.5 4L8 7" fill="none" stroke="#bdbdbd" stroke-width="1.2"/></svg>
<svg style="left:1186px;top:106px;" width="20" height="4" viewBox="0 0 20 4"><rect x="0.0" y="0" width="1.2" height="4" fill="#333"/><rect x="2.5" y="0" width="1.2" height="4" fill="#333"/><rect x="5.0" y="0" width="1.2" height="4" fill="#333"/><rect x="7.5" y="0" width="1.2" height="4" fill="#333"/><rect x="10.0" y="0" width="1.2" height="4" fill="#333"/><rect x="12.5" y="0" width="1.2" height="4" fill="#333"/><rect x="15.0" y="0" width="1.2" height="4" fill="#333"/><rect x="17.5" y="0" width="1.2" height="4" fill="#333"/></svg>
<svg style="left:1124px;top:116px;" width="19" height="21" viewBox="0 0 19 21"><path d="M5 4H8V17H1V8H5Z" fill="#d2d2d2"/><path d="M1 7L4 4V7Z" fill="#d2d2d2"/><path d="M14 4H11V17H18V8H14Z" fill="#d2d2d2"/><path d="M18 7L15 4V7Z" fill="#d2d2d2"/><path d="M9.5 1V20" stroke="#dadada" stroke-width="1"/></svg>
<span class="t" style="left:1151px;top:121.27px;font-size:11.5px;color:#eeeeee;font-weight:700;">Страницы</span>
<svg style="left:1124px;top:145px;" width="19" height="19" viewBox="0 0 19 19"><path d="M1 6L9.5 0.7L18 6L9.5 11.3Z" fill="#cfcfcf"/><path d="M1 11.2L3.6 9.4L9.5 13L15.4 9.4L18 11.2L9.5 17Z" fill="#cfcfcf"/></svg>
<span class="t" style="left:1151px;top:149.27px;font-size:11.5px;color:#eeeeee;font-weight:700;">Слои</span>
<svg style="left:1123px;top:177px;" width="21" height="11" viewBox="0 0 21 11"><rect x="1.3" y="1.3" width="10.5" height="8.4" rx="4.2" fill="none" stroke="#d2d2d2" stroke-width="2.3"/><rect x="8.7" y="1.3" width="10.5" height="8.4" rx="4.2" fill="none" stroke="#d2d2d2" stroke-width="2.3"/></svg>
<span class="t" style="left:1151px;top:177.27px;font-size:11.5px;color:#eeeeee;font-weight:700;">Связи</span>
<div style="left:1114px;top:198px;width:165px;height:2px;background:#3e3e3e"></div>
<svg style="left:1186px;top:203px;" width="20" height="4" viewBox="0 0 20 4"><rect x="0.0" y="0" width="1.2" height="4" fill="#333"/><rect x="2.5" y="0" width="1.2" height="4" fill="#333"/><rect x="5.0" y="0" width="1.2" height="4" fill="#333"/><rect x="7.5" y="0" width="1.2" height="4" fill="#333"/><rect x="10.0" y="0" width="1.2" height="4" fill="#333"/><rect x="12.5" y="0" width="1.2" height="4" fill="#333"/><rect x="15.0" y="0" width="1.2" height="4" fill="#333"/><rect x="17.5" y="0" width="1.2" height="4" fill="#333"/></svg>
<svg style="left:1124px;top:216px;" width="18" height="13" viewBox="0 0 18 13"><rect x="0" y="0" width="18" height="2" fill="#cfcfcf"/><rect x="0" y="5" width="18" height="2.5" fill="#cfcfcf"/><rect x="0" y="10" width="18" height="3" fill="#cfcfcf"/></svg>
<span class="t" style="left:1151px;top:218.27px;font-size:11.5px;color:#eeeeee;font-weight:700;">Обводка</span>
<svg style="left:1123px;top:243px;" width="21" height="15" viewBox="0 0 21 15"><path d="M2 9.5C1 7 3 5.5 5.5 6C7.5 6.5 8 5 8.5 3C9.5 1 12 0.5 14.5 1C18 1.7 20 4.5 20 7.5C20 11.5 16 14 11 14C6 14 2.5 12.5 2 9.5Z" fill="#cfcfcf"/><circle cx="5.5" cy="10.3" r="1.3" fill="#575757"/><circle cx="9.5" cy="12" r="1.3" fill="#575757"/><circle cx="13.5" cy="11.2" r="1.3" fill="#575757"/><circle cx="16.8" cy="8.3" r="1.3" fill="#575757"/><circle cx="16" cy="4.6" r="1.3" fill="#575757"/></svg>
<span class="t" style="left:1151px;top:246.27px;font-size:11.5px;color:#eeeeee;font-weight:700;">Цвета</span>
<div style="left:1114px;top:267px;width:165px;height:2px;background:#3e3e3e"></div>
<svg style="left:1186px;top:272px;" width="20" height="4" viewBox="0 0 20 4"><rect x="0.0" y="0" width="1.2" height="4" fill="#333"/><rect x="2.5" y="0" width="1.2" height="4" fill="#333"/><rect x="5.0" y="0" width="1.2" height="4" fill="#333"/><rect x="7.5" y="0" width="1.2" height="4" fill="#333"/><rect x="10.0" y="0" width="1.2" height="4" fill="#333"/><rect x="12.5" y="0" width="1.2" height="4" fill="#333"/><rect x="15.0" y="0" width="1.2" height="4" fill="#333"/><rect x="17.5" y="0" width="1.2" height="4" fill="#333"/></svg>
<div style="left:1119px;top:281px;width:154px;height:22px;background:#383838;border-radius:3px;border:1px solid #444"></div>
<svg style="left:1125px;top:287px;" width="16" height="11" viewBox="0 0 16 11"><rect x="0" y="0" width="16" height="11" fill="#d0d0d0"/><rect x="1" y="1" width="4" height="4" fill="#6c6c6c"/><rect x="6" y="1" width="4" height="4" fill="#b4b4b4"/><rect x="11" y="1" width="4" height="4" fill="#5e5e5e"/><rect x="1" y="6" width="4" height="4" fill="#6a6a6a"/><rect x="6" y="6" width="4" height="4" fill="#8e8e8e"/><rect x="11" y="6" width="4" height="4" fill="#aaaaaa"/></svg>
<span class="t" style="left:1151px;top:286.77px;font-size:11.5px;color:#eeeeee;font-weight:700;">Образцы</span>
<div style="left:1114px;top:308px;width:165px;height:2px;background:#3e3e3e"></div>
<div style="left:69px;top:112px;width:541px;height:402px;border-radius:6px;box-shadow:0 8px 30px 4px rgba(0,0,0,0.45)"></div>
<div style="left:69px;top:112px;width:541px;height:402px;background:#535353;border-radius:6px 6px 3px 3px;overflow:hidden"></div>
<div style="left:69px;top:112px;width:541px;height:22px;border-radius:6px 6px 0 0;background:linear-gradient(180deg,#ebebeb,#d5d5d5)"></div>
<span class="t" style="left:339.5px;top:116.40px;font-size:13.7px;color:#2a2a2a;font-weight:400;transform:translateX(-50%);">Поля и колонки</span>
<div style="left:500px;top:149px;width:95px;height:26px;border:2px solid #f4f4f4;border-radius:13px"></div>
<span class="t" style="left:547.5px;top:156.34px;font-size:12px;color:#f2f2f2;font-weight:400;transform:translateX(-50%);">OK</span>
<div style="left:500px;top:185px;width:95px;height:26px;border:1.5px solid #dcdcdc;border-radius:13px"></div>
<span class="t" style="left:547.5px;top:192.54px;font-size:12px;color:#f2f2f2;font-weight:400;transform:translateX(-50%);">Отмена</span>
<div style="left:84px;top:161px;width:401px;height:86px;border:1px solid #464646;border-radius:3px;box-shadow:inset 1px 1px 0 rgba(255,255,255,0.04)"></div>
<span class="t" style="left:94px;top:153px;font-size:12.4px;color:#f0f0f0;background:#535353;padding:0 4px;line-height:1">Поля</span>
<span class="t" style="right:1106.3px;top:179.92px;font-size:12.5px;color:#f0f0f0;font-weight:400;">Сверху:</span>
<span class="t" style="right:1116px;top:206.92px;font-size:12.5px;color:#f0f0f0;font-weight:400;">Снизу:</span>
<div style="left:178px;top:175px;width:18px;height:20px;background:#3e3e3e;border:1px solid #6a6a6a;border-right:none;border-radius:2px 0 0 2px"></div>
<div style="left:196px;top:175px;width:66px;height:20px;background:#fbfdff;box-shadow:0 0 0 1px #6aa7e6, 0 0 2px 2px rgba(90,150,220,0.45);border-radius:1px"></div>
<div style="left:200.5px;top:178px;width:48.5px;height:14.5px;background:#b5d5fb"></div>
<span class="t" style="left:201.5px;top:179.60px;font-size:13px;color:#1d2a38;font-weight:400;">12,7 мм</span>
<svg style="left:182.5px;top:178px;" width="9" height="6" viewBox="0 0 9 6"><path d="M1 5L4.5 1.5L8 5" fill="none" stroke="#d8d8d8" stroke-width="1.1"/></svg>
<svg style="left:182.5px;top:186px;" width="9" height="6" viewBox="0 0 9 6"><path d="M1 1L4.5 4.5L8 1" fill="none" stroke="#d8d8d8" stroke-width="1.1"/></svg>
<div style="left:178px;top:201px;width:84px;height:20px;background:#3f3f3f;border:1px solid #6a6a6a;border-radius:2px"></div>
<div style="left:196px;top:202px;width:1px;height:18px;background:#6a6a6a"></div>
<span class="t" style="left:201.5px;top:206.50px;font-size:13px;color:#ececec;font-weight:400;">12,7 мм</span>
<svg style="left:182.5px;top:204px;" width="9" height="6" viewBox="0 0 9 6"><path d="M1 5L4.5 1.5L8 5" fill="none" stroke="#d8d8d8" stroke-width="1.1"/></svg>
<svg style="left:182.5px;top:212px;" width="9" height="6" viewBox="0 0 9 6"><path d="M1 1L4.5 4.5L8 1" fill="none" stroke="#d8d8d8" stroke-width="1.1"/></svg>
<div style="left:268px;top:188px;width:18px;height:18px;background:#2f2f2f;border-radius:3px"></div>
<svg style="left:272px;top:190px;" width="10" height="14" viewBox="0 0 10 14"><rect x="2" y="1" width="5" height="7" rx="2.5" fill="none" stroke="#d6d6d6" stroke-width="1.3"/><rect x="3" y="6" width="5" height="7" rx="2.5" fill="none" stroke="#d6d6d6" stroke-width="1.3"/></svg>
<span class="t" style="right:908px;top:179.66px;font-size:12.8px;color:#f0f0f0;font-weight:400;">Внутри:</span>
<span class="t" style="right:908px;top:206.66px;font-size:12.8px;color:#f0f0f0;font-weight:400;">Снаружи:</span>
<div style="left:376px;top:175px;width:84px;height:20px;background:#3f3f3f;border:1px solid #6a6a6a;border-radius:2px"></div>
<div style="left:394px;top:176px;width:1px;height:18px;background:#6a6a6a"></div>
<span class="t" style="left:399px;top:180.50px;font-size:13px;color:#ececec;font-weight:400;">12,7 мм</span>
<svg style="left:380.5px;top:178px;" width="9" height="6" viewBox="0 0 9 6"><path d="M1 5L4.5 1.5L8 5" fill="none" stroke="#d8d8d8" stroke-width="1.1"/></svg>
<svg style="left:380.5px;top:186px;" width="9" height="6" viewBox="0 0 9 6"><path d="M1 1L4.5 4.5L8 1" fill="none" stroke="#d8d8d8" stroke-width="1.1"/></svg>
<div style="left:376px;top:201px;width:84px;height:20px;background:#3f3f3f;border:1px solid #6a6a6a;border-radius:2px"></div>
<div style="left:394px;top:202px;width:1px;height:18px;background:#6a6a6a"></div>
<span class="t" style="left:399px;top:206.50px;font-size:13px;color:#ececec;font-weight:400;">12,7 мм</span>
<svg style="left:380.5px;top:204px;" width="9" height="6" viewBox="0 0 9 6"><path d="M1 5L4.5 1.5L8 5" fill="none" stroke="#d8d8d8" stroke-width="1.1"/></svg>
<svg style="left:380.5px;top:212px;" width="9" height="6" viewBox="0 0 9 6"><path d="M1 1L4.5 4.5L8 1" fill="none" stroke="#d8d8d8" stroke-width="1.1"/></svg>
<div style="left:84px;top:273px;width:401px;height:51px;border:1px solid #464646;border-radius:3px;box-shadow:inset 1px 1px 0 rgba(255,255,255,0.04)"></div>
<span class="t" style="left:94px;top:265.5px;font-size:13px;color:#f0f0f0;background:#535353;padding:0 4px;line-height:1">Колонки</span>
<span class="t" style="right:1106.3px;top:292.50px;font-size:13px;color:#f0f0f0;font-weight:400;">Количество:</span>
<div style="left:178px;top:288px;width:84px;height:21px;background:#3f3f3f;border:1px solid #6a6a6a;border-radius:2px"></div>
<div style="left:196px;top:289px;width:1px;height:19px;background:#6a6a6a"></div>
<span class="t" style="left:201.5px;top:293.50px;font-size:13px;color:#ececec;font-weight:400;">1</span>
<svg style="left:182.5px;top:291px;" width="9" height="6" viewBox="0 0 9 6"><path d="M1 5L4.5 1.5L8 5" fill="none" stroke="#d8d8d8" stroke-width="1.1"/></svg>
<svg style="left:182.5px;top:300px;" width="9" height="6" viewBox="0 0 9 6"><path d="M1 1L4.5 4.5L8 1" fill="none" stroke="#d8d8d8" stroke-width="1.1"/></svg>
<span class="t" style="right:898px;top:292.83px;font-size:12.6px;color:#f0f0f0;font-weight:400;">Средник:</span>
<div style="left:386px;top:288px;width:84px;height:21px;background:#3f3f3f;border:1px solid #6a6a6a;border-radius:2px"></div>
<div style="left:404px;top:289px;width:1px;height:19px;background:#6a6a6a"></div>
<span class="t" style="left:409px;top:293.50px;font-size:13px;color:#ececec;font-weight:400;">4,233 мм</span>
<svg style="left:390.5px;top:291px;" width="9" height="6" viewBox="0 0 9 6"><path d="M1 5L4.5 1.5L8 5" fill="none" stroke="#d8d8d8" stroke-width="1.1"/></svg>
<svg style="left:390.5px;top:300px;" width="9" height="6" viewBox="0 0 9 6"><path d="M1 1L4.5 4.5L8 1" fill="none" stroke="#d8d8d8" stroke-width="1.1"/></svg>
<div style="left:84px;top:345px;width:401px;height:139px;border:1px solid #464646;border-radius:3px;box-shadow:inset 1px 1px 0 rgba(255,255,255,0.04)"></div>
<div style="left:94px;top:338px;width:128px;height:14px;background:#535353"></div>
<div style="left:99px;top:339px;width:12px;height:12px;background:#6b6b6b;border-radius:2px"></div>
<svg style="left:99px;top:339px;" width="12" height="12" viewBox="0 0 12 12"><path d="M2.5 6L5 8.5L9.5 3" fill="none" stroke="#8c8c8c" stroke-width="1.8"/></svg>
<span class="t" style="left:117px;top:338.33px;font-size:12.6px;color:#9c9c9c;font-weight:400;">Настроить макет</span>
<div style="left:95px;top:370px;width:12px;height:12px;border:1px solid #6c6c6c;border-radius:2px"></div>
<span class="t" style="left:113px;top:369.66px;font-size:12.8px;color:#9c9c9c;font-weight:400;">Задать размер шрифта</span>
<div style="left:115px;top:396px;width:12px;height:12px;border:1px solid #666;border-radius:2px"></div>
<span class="t" style="left:133px;top:395.66px;font-size:12.8px;color:#9c9c9c;font-weight:400;">Установить ограничения размера шрифта</span>
<span class="t" style="right:1134.5px;top:421.33px;font-size:12.6px;color:#a8a8a8;font-weight:400;">Мин.:</span>
<div style="left:150px;top:417px;width:88px;height:21px;background:#5d5d5d;border-radius:3px"></div>
<svg style="left:154.5px;top:420px;" width="9" height="6" viewBox="0 0 9 6"><path d="M1 5L4.5 1.5L8 5" fill="none" stroke="#9a9a9a" stroke-width="1.1"/></svg>
<svg style="left:154.5px;top:429px;" width="9" height="6" viewBox="0 0 9 6"><path d="M1 1L4.5 4.5L8 1" fill="none" stroke="#9a9a9a" stroke-width="1.1"/></svg>
<span class="t" style="left:172px;top:421.50px;font-size:13px;color:#d6d6d6;font-weight:400;">6 пт</span>
<svg style="left:223px;top:424.5px;" width="10" height="6" viewBox="0 0 10 6"><path d="M1.5 1.5L5 4.5L8.5 1.5" fill="none" stroke="#a8a8a8" stroke-width="1.2"/></svg>
<span class="t" style="right:913.5px;top:421.33px;font-size:12.6px;color:#a8a8a8;font-weight:400;">Макс.:</span>
<div style="left:371px;top:417px;width:88px;height:21px;background:#5d5d5d;border-radius:3px"></div>
<svg style="left:375.5px;top:420px;" width="9" height="6" viewBox="0 0 9 6"><path d="M1 5L4.5 1.5L8 5" fill="none" stroke="#9a9a9a" stroke-width="1.1"/></svg>
<svg style="left:375.5px;top:429px;" width="9" height="6" viewBox="0 0 9 6"><path d="M1 1L4.5 4.5L8 1" fill="none" stroke="#9a9a9a" stroke-width="1.1"/></svg>
<span class="t" style="left:393px;top:421.50px;font-size:13px;color:#d6d6d6;font-weight:400;">324 пт</span>
<svg style="left:444px;top:424.5px;" width="10" height="6" viewBox="0 0 10 6"><path d="M1.5 1.5L5 4.5L8.5 1.5" fill="none" stroke="#a8a8a8" stroke-width="1.2"/></svg>
<div style="left:95px;top:452px;width:12px;height:12px;border:1px solid #6c6c6c;border-radius:2px"></div>
<span class="t" style="left:113px;top:452.16px;font-size:12.8px;color:#9c9c9c;font-weight:400;">Настроить заблокированное содержимое</span>
<div style="left:615px;top:324px;width:242px;height:285px;background:#535353;border-radius:4px 4px 0 0;box-shadow:0 4px 14px rgba(0,0,0,0.35)"></div>
<div style="left:615px;top:324px;width:242px;height:14px;background:#454545;border-radius:4px 4px 0 0"></div>
<svg style="left:620px;top:327px;" width="8" height="8" viewBox="0 0 8 8"><path d="M1.5 1.5L6.5 6.5M6.5 1.5L1.5 6.5" stroke="#b0b0b0" stroke-width="1.2"/></svg>
<svg style="left:842px;top:327px;" width="8" height="8" viewBox="0 0 8 8"><path d="M3.5 1L1 4L3.5 7M7.5 1L5 4L7.5 7" fill="none" stroke="#a8a8a8" stroke-width="1"/></svg>
<div style="left:615px;top:338px;width:242px;height:27px;background:#424242"></div>
<div style="left:615px;top:338px;width:42px;height:27px;background:#474747"></div>
<div style="left:657px;top:338px;width:1px;height:27px;background:#3a3a3a"></div>
<div style="left:658px;top:338px;width:41px;height:27px;background:#474747"></div>
<div style="left:699px;top:338px;width:116px;height:27px;background:#535353"></div>
<div style="left:615px;top:338px;width:42px;height:27px;overflow:hidden"><span class="t" style="left:13px;top:8.5px;font-size:11.3px;color:#a6a6a6;font-weight:700">Статьи</span></div>
<div style="left:658px;top:338px;width:39px;height:27px;overflow:hidden"><span class="t" style="left:11px;top:8.5px;font-size:11.3px;color:#a6a6a6;font-weight:700">Переходы</span></div>
<span class="t" style="left:709.6px;top:346.73px;font-size:11.9px;color:#f0f0f0;font-weight:700;">"Жидкий" макет</span>
<span class="t" style="left:621px;top:372.94px;font-size:10.7px;color:#e6e6e6;font-weight:400;">Правило стр. с адапт.:</span>
<span class="t" style="right:435.20000000000005px;top:373.07px;font-size:10.55px;color:#e6e6e6;font-weight:400;">Страница:</span>
<div style="left:621px;top:391px;width:203px;height:20px;background:#5b5b5b;border-radius:3px"></div>
<svg style="left:809px;top:398px;" width="10" height="6" viewBox="0 0 10 6"><path d="M1.5 1.5L5 4.5L8.5 1.5" fill="none" stroke="#8a8a8a" stroke-width="1.2"/></svg>
<div style="left:621px;top:416px;width:231px;height:1px;background:#4b4b4b"></div>
<span class="t" style="left:621px;top:423.69px;font-size:11px;color:#e6e6e6;font-weight:400;">Содержимое:</span>
<div style="left:621px;top:445px;width:12px;height:12px;border:1px solid #bdbdbd;border-radius:2px"></div>
<span class="t" style="left:639.5px;top:445.68px;font-size:10.65px;color:#e6e6e6;font-weight:400;">Автоматическая подгонка</span>
<div style="left:621px;top:466px;width:231px;height:1px;background:#4b4b4b"></div>
<span class="t" style="left:621px;top:474.86px;font-size:10.8px;color:#8c8c8c;font-weight:400;">Ограничения объектов:</span>
<span class="t" style="left:626px;top:493.94px;font-size:10.7px;color:#8c8c8c;font-weight:400;">Изменить размер отн-но страницы:</span>
<div style="left:632px;top:516px;width:12px;height:12px;border:1px solid #6a6a6a;border-radius:2px"></div>
<span class="t" style="left:650px;top:516.36px;font-size:10.8px;color:#8c8c8c;font-weight:400;">Высота</span>
<div style="left:737px;top:516px;width:12px;height:12px;border:1px solid #6a6a6a;border-radius:2px"></div>
<span class="t" style="left:755px;top:516.36px;font-size:10.8px;color:#8c8c8c;font-weight:400;">Ширина</span>
<span class="t" style="left:625.5px;top:539.61px;font-size:10.5px;color:#8c8c8c;font-weight:400;">Ось вращения:</span>
<div style="left:632px;top:560px;width:12px;height:12px;border:1px solid #6a6a6a;border-radius:2px"></div>
<span class="t" style="left:650px;top:560.86px;font-size:10.8px;color:#8c8c8c;font-weight:400;">Сверху</span>
<div style="left:737px;top:560px;width:12px;height:12px;border:1px solid #6a6a6a;border-radius:2px"></div>
<span class="t" style="left:755px;top:560.86px;font-size:10.8px;color:#8c8c8c;font-weight:400;">Слева</span>
<div style="left:632px;top:586px;width:12px;height:12px;border:1px solid #6a6a6a;border-radius:2px"></div>
<span class="t" style="left:650px;top:586.86px;font-size:10.8px;color:#8c8c8c;font-weight:400;">Снизу</span>
<div style="left:737px;top:586px;width:12px;height:12px;border:1px solid #6a6a6a;border-radius:2px"></div>
<span class="t" style="left:755px;top:586.86px;font-size:10.8px;color:#8c8c8c;font-weight:400;">Справа</span>
<div style="left:872px;top:270px;width:240px;height:255px;background:#535353;box-shadow:0 4px 14px rgba(0,0,0,0.35)"></div>
<div style="left:953px;top:270px;width:159px;height:27px;background:#424242"></div>
<svg style="left:879px;top:279px;" width="7" height="11" viewBox="0 0 7 11"><path d="M1 4L3.5 1.5L6 4M1 7L3.5 9.5L6 7" fill="none" stroke="#c8c8c8" stroke-width="1"/></svg>
<span class="t" style="left:890px;top:278.77px;font-size:11.5px;color:#f2f2f2;font-weight:700;">Образцы</span>
<svg style="left:1071px;top:279px;" width="11" height="10" viewBox="0 0 11 10"><path d="M1 1.5L4.5 5L1 8.5M5.5 1.5L9 5L5.5 8.5" fill="none" stroke="#e0e0e0" stroke-width="1.3"/></svg>
<div style="left:1088px;top:278px;width:1px;height:12px;background:#9a9a9a"></div>
<svg style="left:1096px;top:279px;" width="11" height="10" viewBox="0 0 11 10"><path d="M0 1.5H11M0 4H11M0 6.5H11M0 9H11" stroke="#d8d8d8" stroke-width="1"/></svg>
<div style="left:889px;top:315px;width:18px;height:18px;background:#000"></div>
<div style="left:894px;top:320px;width:8px;height:8px;background:#535353"></div>
<div style="left:879px;top:305px;width:19px;height:19px;background:#fff"></div>
<svg style="left:879px;top:305px;" width="19" height="19" viewBox="0 0 19 19"><path d="M0.5 18.5L18.5 0.5" stroke="#c4161c" stroke-width="2.2"/></svg>
<svg style="left:900px;top:304px;" width="8" height="8" viewBox="0 0 8 8"><path d="M1.5 2.5H5A1.5 1.5 0 0 1 6.5 4V7" fill="none" stroke="#cfcfcf" stroke-width="0.9"/><path d="M0.5 2.5L2.5 0.5V4.5ZM6.5 7.5L4.8 5.8H8.2Z" fill="#cfcfcf"/></svg>
<div style="left:917px;top:308px;width:19px;height:19px;background:#2e2e2e;border-radius:3px"></div>
<svg style="left:921px;top:312px;" width="11" height="11" viewBox="0 0 11 11"><rect x="1.8" y="2" width="7.6" height="7.6" fill="#5a5a5a" stroke="#d6d6d6" stroke-width="1.2"/></svg>
<span class="t" style="left:942px;top:311.07px;font-size:13.5px;color:#d0d0d0;font-weight:700;font-family:'Liberation Serif',serif">T</span>
<span class="t" style="left:971.5px;top:312.52px;font-size:11.2px;color:#e6e6e6;font-weight:400;">Оттенок:</span>
<div style="left:1020px;top:307px;width:53px;height:21px;background:#5b5b5b;border-radius:2px"></div>
<svg style="left:1058px;top:312px;" width="7" height="10" viewBox="0 0 7 10"><path d="M1.5 1.5L5 5L1.5 8.5" fill="none" stroke="#9a9a9a" stroke-width="1.1"/></svg>
<span class="t" style="left:1075px;top:312.27px;font-size:11.5px;color:#eaeaea;font-weight:700;">%</span>
<div style="left:872px;top:337px;width:226px;height:22px;background:#4a6a90"></div>
<div style="left:891px;top:341px;width:13px;height:13px;background:#fff;border:1px solid #222"></div>
<svg style="left:891px;top:341px;" width="13" height="13" viewBox="0 0 13 13"><path d="M1 12L12 1" stroke="#c2232b" stroke-width="1.6"/></svg>
<span class="t" style="left:911px;top:343.19px;font-size:11px;color:#eeeeee;font-weight:700;">[Нет]</span>
<svg style="left:1040px;top:341px;" width="13" height="13" viewBox="0 0 13 13"><path d="M1 1L12 12M12 1L1 12" stroke="#d0d0d0" stroke-width="1.3"/><path d="M9 2.5L11.5 5L5 11.5L1.5 12L2 8.5Z" fill="#d0d0d0"/></svg>
<div style="left:1072px;top:341px;width:12px;height:12px;background:#fff;border:1px solid #222"></div>
<svg style="left:1072px;top:341px;" width="12" height="12" viewBox="0 0 12 12"><path d="M1 11L11 1" stroke="#c2232b" stroke-width="1.6"/></svg>
<div style="left:872px;top:359px;width:226px;height:1px;background:#4b4b4b"></div>
<div style="left:891px;top:363px;width:13px;height:13px;background:#000;border:1px solid #2a2a2a"></div>
<span class="t" style="left:911px;top:365.19px;font-size:11px;color:#eeeeee;font-weight:400;">[Регист-я]</span>
<svg style="left:1040px;top:363px;" width="13" height="13" viewBox="0 0 13 13"><path d="M1 1L12 12M12 1L1 12" stroke="#d0d0d0" stroke-width="1.3"/><path d="M9 2.5L11.5 5L5 11.5L1.5 12L2 8.5Z" fill="#d0d0d0"/></svg>
<svg style="left:1072px;top:363px;" width="12" height="12" viewBox="0 0 12 12"><rect x="0.5" y="0.5" width="11" height="11" fill="none" stroke="#cfcfcf" stroke-width="1"/><circle cx="6" cy="6" r="3" fill="none" stroke="#cfcfcf" stroke-width="1"/><path d="M6 1.5V10.5M1.5 6H10.5" stroke="#cfcfcf" stroke-width="1"/></svg>
<div style="left:872px;top:381px;width:226px;height:1px;background:#4b4b4b"></div>
<div style="left:891px;top:385px;width:13px;height:13px;background:#fff;border:1px solid #2a2a2a"></div>
<span class="t" style="left:911px;top:387.19px;font-size:11px;color:#eeeeee;font-weight:400;">[Бумага]</span>
<div style="left:872px;top:403px;width:226px;height:1px;background:#4b4b4b"></div>
<div style="left:891px;top:407px;width:13px;height:13px;background:#000;border:1px solid #2a2a2a"></div>
<span class="t" style="left:911px;top:409.19px;font-size:11px;color:#eeeeee;font-weight:400;">[Черный]</span>
<svg style="left:1040px;top:407px;" width="13" height="13" viewBox="0 0 13 13"><path d="M1 1L12 12M12 1L1 12" stroke="#d0d0d0" stroke-width="1.3"/><path d="M9 2.5L11.5 5L5 11.5L1.5 12L2 8.5Z" fill="#d0d0d0"/></svg>
<svg style="left:1057px;top:408px;" width="12" height="12" viewBox="0 0 12 12"><rect x="0" y="0" width="12" height="12" fill="#bdbdbd"/><rect x="1" y="1" width="1" height="1" fill="#535353"/><rect x="1" y="5" width="1" height="1" fill="#535353"/><rect x="1" y="9" width="1" height="1" fill="#535353"/><rect x="3" y="3" width="1" height="1" fill="#535353"/><rect x="3" y="7" width="1" height="1" fill="#535353"/><rect x="3" y="11" width="1" height="1" fill="#535353"/><rect x="5" y="1" width="1" height="1" fill="#535353"/><rect x="5" y="5" width="1" height="1" fill="#535353"/><rect x="5" y="9" width="1" height="1" fill="#535353"/><rect x="7" y="3" width="1" height="1" fill="#535353"/><rect x="7" y="7" width="1" height="1" fill="#535353"/><rect x="7" y="11" width="1" height="1" fill="#535353"/><rect x="9" y="1" width="1" height="1" fill="#535353"/><rect x="9" y="5" width="1" height="1" fill="#535353"/><rect x="9" y="9" width="1" height="1" fill="#535353"/><rect x="11" y="3" width="1" height="1" fill="#535353"/><rect x="11" y="7" width="1" height="1" fill="#535353"/><rect x="11" y="11" width="1" height="1" fill="#535353"/></svg>
<svg style="left:1073px;top:408px;" width="12" height="12" viewBox="0 0 12 12"><rect x="0" y="0" width="12" height="12" fill="#f5f5f5"/><path d="M1 1H11L6 6Z" fill="#e2007a"/><path d="M1 1V11L6 6Z" fill="#00a0e4"/><path d="M11 1V11L6 6Z" fill="#ffe100"/><path d="M1 11H11L6 6Z" fill="#000"/></svg>
<div style="left:872px;top:425px;width:226px;height:1px;background:#4b4b4b"></div>
<div style="left:891px;top:429px;width:13px;height:13px;background:#00a0e4;border:1px solid #2a2a2a"></div>
<span class="t" style="left:911px;top:431.19px;font-size:11px;color:#eeeeee;font-weight:400;">C=100 M=0 Y=0 K=0</span>
<svg style="left:1057px;top:430px;" width="12" height="12" viewBox="0 0 12 12"><rect x="0" y="0" width="12" height="12" fill="#bdbdbd"/><rect x="1" y="1" width="1" height="1" fill="#535353"/><rect x="1" y="5" width="1" height="1" fill="#535353"/><rect x="1" y="9" width="1" height="1" fill="#535353"/><rect x="3" y="3" width="1" height="1" fill="#535353"/><rect x="3" y="7" width="1" height="1" fill="#535353"/><rect x="3" y="11" width="1" height="1" fill="#535353"/><rect x="5" y="1" width="1" height="1" fill="#535353"/><rect x="5" y="5" width="1" height="1" fill="#535353"/><rect x="5" y="9" width="1" height="1" fill="#535353"/><rect x="7" y="3" width="1" height="1" fill="#535353"/><rect x="7" y="7" width="1" height="1" fill="#535353"/><rect x="7" y="11" width="1" height="1" fill="#535353"/><rect x="9" y="1" width="1" height="1" fill="#535353"/><rect x="9" y="5" width="1" height="1" fill="#535353"/><rect x="9" y="9" width="1" height="1" fill="#535353"/><rect x="11" y="3" width="1" height="1" fill="#535353"/><rect x="11" y="7" width="1" height="1" fill="#535353"/><rect x="11" y="11" width="1" height="1" fill="#535353"/></svg>
<svg style="left:1073px;top:430px;" width="12" height="12" viewBox="0 0 12 12"><rect x="0" y="0" width="12" height="12" fill="#f5f5f5"/><path d="M1 1H11L6 6Z" fill="#e2007a"/><path d="M1 1V11L6 6Z" fill="#00a0e4"/><path d="M11 1V11L6 6Z" fill="#ffe100"/><path d="M1 11H11L6 6Z" fill="#000"/></svg>
<div style="left:872px;top:447px;width:226px;height:1px;background:#4b4b4b"></div>
<div style="left:891px;top:451px;width:13px;height:13px;background:#e2007a;border:1px solid #2a2a2a"></div>
<span class="t" style="left:911px;top:453.19px;font-size:11px;color:#eeeeee;font-weight:400;">C=0 M=100 Y=0 K=0</span>
<svg style="left:1057px;top:452px;" width="12" height="12" viewBox="0 0 12 12"><rect x="0" y="0" width="12" height="12" fill="#bdbdbd"/><rect x="1" y="1" width="1" height="1" fill="#535353"/><rect x="1" y="5" width="1" height="1" fill="#535353"/><rect x="1" y="9" width="1" height="1" fill="#535353"/><rect x="3" y="3" width="1" height="1" fill="#535353"/><rect x="3" y="7" width="1" height="1" fill="#535353"/><rect x="3" y="11" width="1" height="1" fill="#535353"/><rect x="5" y="1" width="1" height="1" fill="#535353"/><rect x="5" y="5" width="1" height="1" fill="#535353"/><rect x="5" y="9" width="1" height="1" fill="#535353"/><rect x="7" y="3" width="1" height="1" fill="#535353"/><rect x="7" y="7" width="1" height="1" fill="#535353"/><rect x="7" y="11" width="1" height="1" fill="#535353"/><rect x="9" y="1" width="1" height="1" fill="#535353"/><rect x="9" y="5" width="1" height="1" fill="#535353"/><rect x="9" y="9" width="1" height="1" fill="#535353"/><rect x="11" y="3" width="1" height="1" fill="#535353"/><rect x="11" y="7" width="1" height="1" fill="#535353"/><rect x="11" y="11" width="1" height="1" fill="#535353"/></svg>
<svg style="left:1073px;top:452px;" width="12" height="12" viewBox="0 0 12 12"><rect x="0" y="0" width="12" height="12" fill="#f5f5f5"/><path d="M1 1H11L6 6Z" fill="#e2007a"/><path d="M1 1V11L6 6Z" fill="#00a0e4"/><path d="M11 1V11L6 6Z" fill="#ffe100"/><path d="M1 11H11L6 6Z" fill="#000"/></svg>
<div style="left:872px;top:469px;width:226px;height:1px;background:#4b4b4b"></div>
<div style="left:891px;top:473px;width:13px;height:13px;background:#ffe600;border:1px solid #2a2a2a"></div>
<span class="t" style="left:911px;top:475.19px;font-size:11px;color:#eeeeee;font-weight:400;">C=0 M=0 Y=100 K=0</span>
<svg style="left:1057px;top:474px;" width="12" height="12" viewBox="0 0 12 12"><rect x="0" y="0" width="12" height="12" fill="#bdbdbd"/><rect x="1" y="1" width="1" height="1" fill="#535353"/><rect x="1" y="5" width="1" height="1" fill="#535353"/><rect x="1" y="9" width="1" height="1" fill="#535353"/><rect x="3" y="3" width="1" height="1" fill="#535353"/><rect x="3" y="7" width="1" height="1" fill="#535353"/><rect x="3" y="11" width="1" height="1" fill="#535353"/><rect x="5" y="1" width="1" height="1" fill="#535353"/><rect x="5" y="5" width="1" height="1" fill="#535353"/><rect x="5" y="9" width="1" height="1" fill="#535353"/><rect x="7" y="3" width="1" height="1" fill="#535353"/><rect x="7" y="7" width="1" height="1" fill="#535353"/><rect x="7" y="11" width="1" height="1" fill="#535353"/><rect x="9" y="1" width="1" height="1" fill="#535353"/><rect x="9" y="5" width="1" height="1" fill="#535353"/><rect x="9" y="9" width="1" height="1" fill="#535353"/><rect x="11" y="3" width="1" height="1" fill="#535353"/><rect x="11" y="7" width="1" height="1" fill="#535353"/><rect x="11" y="11" width="1" height="1" fill="#535353"/></svg>
<svg style="left:1073px;top:474px;" width="12" height="12" viewBox="0 0 12 12"><rect x="0" y="0" width="12" height="12" fill="#f5f5f5"/><path d="M1 1H11L6 6Z" fill="#e2007a"/><path d="M1 1V11L6 6Z" fill="#00a0e4"/><path d="M11 1V11L6 6Z" fill="#ffe100"/><path d="M1 11H11L6 6Z" fill="#000"/></svg>
<div style="left:872px;top:491px;width:226px;height:1px;background:#4b4b4b"></div>
<div style="left:1099px;top:337px;width:12px;height:154px;background:#4e4e4e"></div>
<div style="left:1101px;top:350px;width:8px;height:90px;background:#686868;border-radius:4px"></div>
<svg style="left:1100px;top:340px;" width="10" height="7" viewBox="0 0 10 7"><path d="M1.5 5.5L5 2L8.5 5.5" fill="none" stroke="#8a8a8a" stroke-width="1.1"/></svg>
<svg style="left:1100px;top:481px;" width="10" height="7" viewBox="0 0 10 7"><path d="M1.5 1.5L5 5L8.5 1.5" fill="none" stroke="#8a8a8a" stroke-width="1.1"/></svg>
<svg style="left:876px;top:498px;" width="20" height="13" viewBox="0 0 20 13"><path d="M7 11H17A3 3 0 0 0 17 5A4 4 0 0 0 9.5 3A3 3 0 0 0 7 8Z" fill="#7a7a7a"/><path d="M1 9.5H8M6 7.5L8.5 9.5L6 11.5" fill="none" stroke="#7a7a7a" stroke-width="1.1"/></svg>
<svg style="left:991px;top:499px;" width="14" height="12" viewBox="0 0 14 12"><rect x="0.0" y="0.0" width="2.5" height="2.5" fill="#c8c8c8"/><rect x="0.0" y="3.5" width="2.5" height="2.5" fill="#c8c8c8"/><rect x="0.0" y="7.0" width="2.5" height="2.5" fill="#c8c8c8"/><rect x="3.5" y="0.0" width="2.5" height="2.5" fill="#c8c8c8"/><rect x="3.5" y="3.5" width="2.5" height="2.5" fill="#c8c8c8"/><rect x="3.5" y="7.0" width="2.5" height="2.5" fill="#c8c8c8"/><rect x="7.0" y="0.0" width="2.5" height="2.5" fill="#c8c8c8"/><rect x="7.0" y="3.5" width="2.5" height="2.5" fill="#c8c8c8"/><rect x="7.0" y="7.0" width="2.5" height="2.5" fill="#c8c8c8"/><path d="M11 10h3l-1.5 1.5z" fill="#c8c8c8"/></svg>
<svg style="left:1020px;top:500px;" width="14" height="11" viewBox="0 0 14 11"><path d="M0 1H5L6 2.5H14V11H0Z" fill="#c8c8c8"/></svg>
<svg style="left:1049px;top:499px;" width="12" height="12" viewBox="0 0 12 12"><path d="M1 1H11V11H5V7H1Z" fill="#9a9a9a"/><path d="M1 8H4V11Z" fill="#8a8a8a"/></svg>
<svg style="left:1077px;top:498px;" width="12" height="13" viewBox="0 0 12 13"><path d="M1 2.5H11M4 2.5V1H8V2.5M2 3.5H10V12H2Z" fill="none" stroke="#a0a0a0" stroke-width="1"/><path d="M4.5 5V10.5M6 5V10.5M7.5 5V10.5" stroke="#a0a0a0" stroke-width="0.8"/></svg>
<div style="left:872px;top:517px;width:240px;height:8px;background:#474747;border-top:1px solid #3a3a3a"></div>
<svg style="left:982px;top:519px;" width="20" height="4" viewBox="0 0 20 4"><rect x="0.0" y="0" width="1.2" height="4" fill="#333"/><rect x="2.5" y="0" width="1.2" height="4" fill="#333"/><rect x="5.0" y="0" width="1.2" height="4" fill="#333"/><rect x="7.5" y="0" width="1.2" height="4" fill="#333"/><rect x="10.0" y="0" width="1.2" height="4" fill="#333"/><rect x="12.5" y="0" width="1.2" height="4" fill="#333"/><rect x="15.0" y="0" width="1.2" height="4" fill="#333"/><rect x="17.5" y="0" width="1.2" height="4" fill="#333"/></svg>
</body></html>
